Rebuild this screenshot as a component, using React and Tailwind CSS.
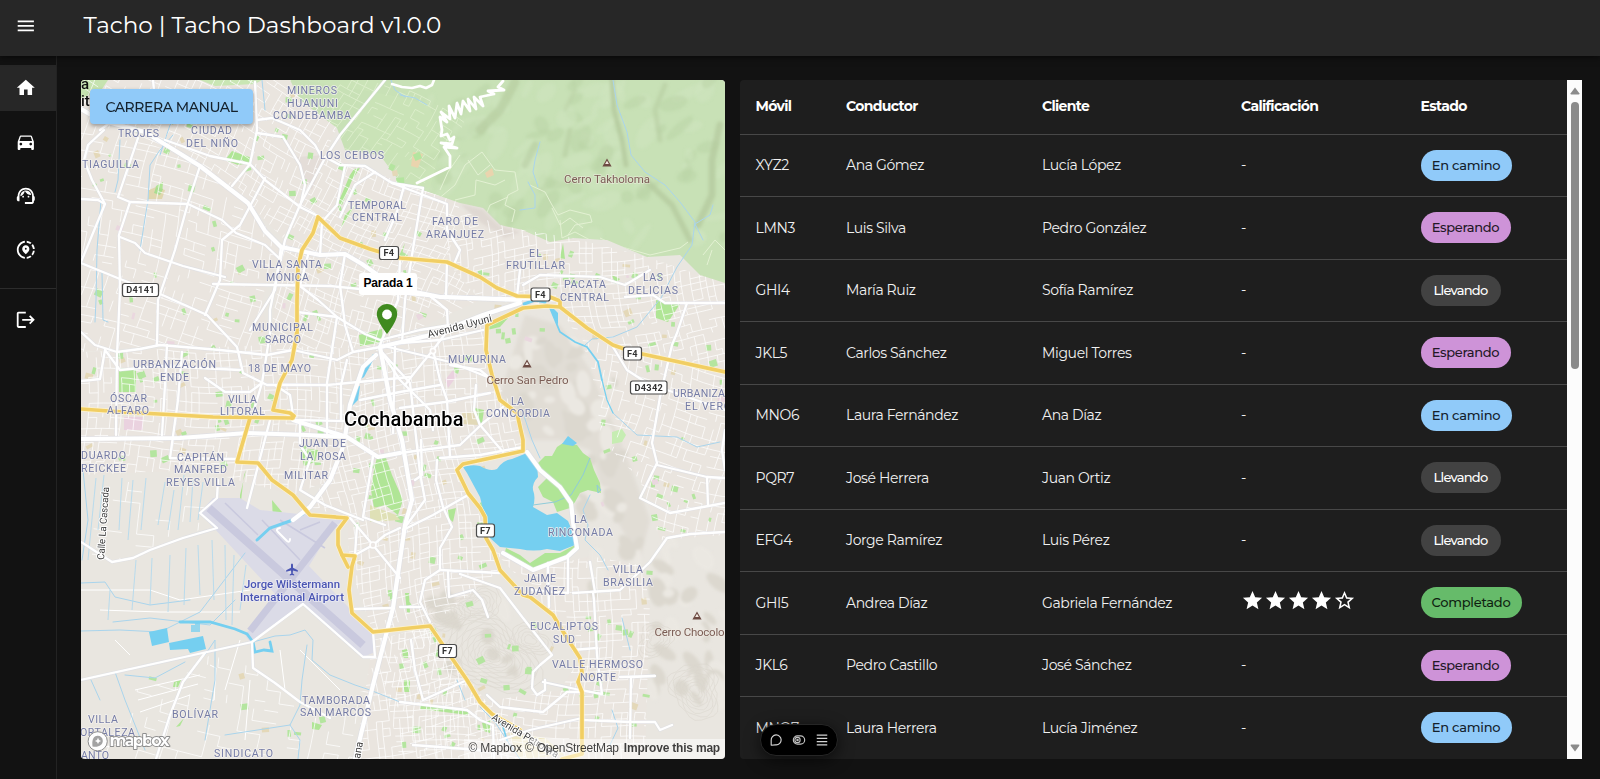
import React from "react";
import {
  MdMenu,
  MdHome,
  MdDirectionsCar,
  MdSupportAgent,
  MdShareLocation,
  MdLogout,
  MdStar,
  MdStarBorder,
} from "react-icons/md";

/* ---------- map data (map canvas spans x 81..725, y 80..758) ---------- */

const makeRandom = (seed) => () => {
  seed = (seed * 1664525 + 1013904223) % 4294967296;
  return seed / 4294967296;
};

/* A slightly warped street grid, rotated by `angle` around its centre. */
function streetGrid({ cx, cy, w, h, angle, sx, sy, keep, seed }) {
  const rnd = makeRandom(seed);
  const a = (angle * Math.PI) / 180;
  const node = (i, j) => {
    const u = i * sx + Math.sin(j * 0.31 + seed) * 3.5 + Math.sin(i * 1.7 + seed) * 1.6 - w / 2;
    const v = j * sy + Math.sin(i * 0.27 + seed * 2) * 3.5 + Math.cos(j * 1.9 + seed) * 1.6 - h / 2;
    const x = cx + u * Math.cos(a) - v * Math.sin(a);
    const y = cy + u * Math.sin(a) + v * Math.cos(a);
    return x.toFixed(1) + " " + y.toFixed(1);
  };
  let d = "";
  for (let i = 0; i * sx <= w; i++) {
    for (let j = 0; j * sy <= h; j++) {
      if (rnd() < keep) d += `M${node(i, j)}L${node(i + 1, j)}`;
      if (rnd() < keep) d += `M${node(i, j)}L${node(i, j + 1)}`;
    }
  }
  return d;
}

/* An irregular closed contour line of mean radius `r`. */
function contour(cx, cy, r, seed) {
  let d = "";
  for (let k = 0; k <= 36; k++) {
    const t = (k / 36) * Math.PI * 2;
    const q = r * (1 + 0.2 * Math.sin(2 * t + seed) + 0.13 * Math.sin(3 * t + seed * 2) + 0.05 * Math.sin(9 * t + seed + r));
    d += (k ? "L" : "M") + (cx + q * Math.cos(t) * 1.1).toFixed(1) + " " + (cy + q * Math.sin(t) * 0.9).toFixed(1);
  }
  return d;
}

const districts = [
  { id: "d1", clip: "81,80 290,80 337,128 325,155 285,240 248,203 200,166 138,138 81,109", cx: 205, cy: 155, w: 320, h: 230, angle: 28, sx: 8, sy: 8, keep: 0.66, seed: 3 },
  { id: "d2", clip: "81,109 138,138 200,166 248,203 281,247 262,300 270,350 160,345 81,352", cx: 170, cy: 230, w: 320, h: 330, angle: 14, sx: 11, sy: 9, keep: 0.5, seed: 7 },
  { id: "d3", clip: "285,240 325,155 345,160 400,182 460,203 447,262 480,300 380,347 268,350", cx: 370, cy: 250, w: 290, h: 280, angle: 22, sx: 7.5, sy: 8, keep: 0.74, seed: 11 },
  { id: "d4", clip: "447,205 500,225 523,230 573,238 647,257 700,275 725,283 725,370 613,345 560,307 480,300 447,262", cx: 590, cy: 290, w: 320, h: 190, angle: -8, sx: 8, sy: 7.5, keep: 0.68, seed: 13 },
  { id: "d5", clip: "81,352 270,345 380,350 345,437 330,480 293,495 200,470 81,475", cx: 210, cy: 410, w: 330, h: 190, angle: 2, sx: 8, sy: 8.5, keep: 0.68, seed: 17 },
  { id: "d6", clip: "380,340 487,325 492,375 517,413 523,451 457,470 487,530 500,570 430,626 373,632 350,567 347,518 310,507 345,437", cx: 415, cy: 480, w: 220, h: 330, angle: -9, sx: 7.5, sy: 8, keep: 0.75, seed: 19 },
  { id: "d7", clip: "560,307 613,345 725,372 725,535 660,540 640,480 602,440 590,360", cx: 650, cy: 425, w: 220, h: 260, angle: 14, sx: 8, sy: 9, keep: 0.58, seed: 23 },
  { id: "d8", clip: "493,550 533,570 590,556 640,565 650,600 645,759 400,759 375,640 430,626 480,702 560,690 580,658 553,615", cx: 520, cy: 660, w: 300, h: 240, angle: 3, sx: 8, sy: 8, keep: 0.66, seed: 29 },
  { id: "d9", clip: "373,640 430,626 500,720 560,759 355,759", cx: 440, cy: 700, w: 220, h: 170, angle: -12, sx: 8, sy: 9, keep: 0.68, seed: 31 },
  { id: "d10", clip: "135,690 180,678 210,655 255,668 300,702 370,690 357,759 100,759", cx: 230, cy: 712, w: 300, h: 130, angle: 12, sx: 13, sy: 11, keep: 0.3, seed: 37 },
  { id: "d11", clip: "81,480 200,485 213,525 112,562 81,620", cx: 145, cy: 545, w: 160, h: 170, angle: 6, sx: 15, sy: 14, keep: 0.2, seed: 41 },
];

const arterials = [
  "81,109 100,120 145,132 200,166 248,203 265,231 281,247 320,255 345,254 362,264 385,280 415,292 440,297 520,300",
  "376,355 363,367 350,405 345,437 342,450 330,480 310,507 293,520",
  "380,347 435,334 483,315 520,303",
  "380,347 390,400 402,440 412,500 405,525 393,608 373,685 355,759",
  "527,452 540,470 560,487 571,503 574,530 577,548 567,557 533,570 503,553",
  "81,439 180,438 247,433 307,435 345,437",
  "400,453 378,457 347,437 293,420",
];

const streets = [
  "104,130 88,145 84,160 92,180 105,204 81,262",
  "81,199 98,200 105,204",
  "81,263 120,279 158,293 207,315 237,347 243,373 267,385 327,385 410,377",
  "138,138 118,197 130,202 188,204 222,220 236,233 265,245 281,260",
  "200,166 188,203 175,250 158,300 157,345",
  "130,202 119,235 120,290 117,355 116,435",
  "120,237 135,243 145,253 183,266 225,277",
  "153,80 154,90 100,130",
  "255,82 257,130 250,164 265,180 300,207 320,217",
  "250,164 232,186",
  "257,133 283,137 300,165 305,185 300,207",
  "257,120 272,118 300,130 315,145 322,158",
  "165,140 210,156 250,164",
  "385,80 340,135 325,158 300,205 285,240 278,270 270,310 270,333 262,383 253,413",
  "325,157 340,165 365,166 392,183 447,204 447,230 460,250 455,262",
  "345,166 337,205 322,222 320,255",
  "265,178 240,225 222,240 220,280 205,315",
  "375,172 355,185 340,217",
  "392,183 423,188 412,255 405,300 402,343",
  "385,240 397,212 404,186",
  "213,284 330,286 430,296 560,300",
  "430,296 447,310 448,330 433,350 440,380 447,400 450,457",
  "400,261 398,300 380,345",
  "281,247 275,290 250,330",
  "308,255 300,286 318,300 337,317 327,383 327,433",
  "345,254 340,285 345,325 353,352",
  "297,312 337,317 365,334 380,340 420,330 450,325",
  "81,332 95,345 117,352 140,349 160,345 220,350 267,355 293,350 337,360 353,352 380,347",
  "81,381 100,379 105,350 120,370 160,366 240,370",
  "167,345 165,385 162,435",
  "182,352 178,400 173,436 170,458 237,459",
  "205,378 225,392 250,392 262,383",
  "275,385 290,395 293,415",
  "293,420 345,421",
  "270,420 247,508",
  "300,420 300,445 310,460 300,490 325,505 363,520",
  "373,457 367,493 363,517 385,525",
  "347,360 341,385 341,420",
  "380,350 410,383 420,473 425,500 403,530",
  "380,350 400,380 430,410 433,430",
  "433,350 415,372 405,385",
  "400,343 440,340 483,330",
  "400,408 445,402 490,393",
  "360,400 400,392 440,385",
  "400,453 460,445 483,423 503,407",
  "440,458 480,455 523,447",
  "437,460 436,480 443,507 452,527 440,548 440,570 425,580 420,602 430,622",
  "450,365 480,370 492,380",
  "476,385 474,410 480,425 503,452",
  "415,480 422,475 421,440",
  "403,530 433,515 468,495",
  "440,570 500,573",
  "400,607 420,607",
  "448,572 449,597 473,590 482,600 488,617",
  "460,574 500,588 523,618 552,655 540,665 533,672 532,688 537,695 545,690 545,680",
  "543,682 580,690 602,694 597,655 594,600 593,592",
  "487,695 500,707 543,712 567,692 580,692",
  "568,558 568,593 530,590",
  "573,593 620,590 650,562 667,538 690,534 725,532",
  "590,562 595,592",
  "548,563 549,607",
  "573,650 597,648",
  "620,677 655,676 631,677 630,738",
  "583,720 630,722 655,722 660,730 672,725",
  "400,702 467,710 480,720 493,725 494,759",
  "413,745 480,750",
  "500,740 530,730 582,718",
  "411,640 415,670 423,700 467,680",
  "687,303 677,333 672,345 660,397 652,443 657,463 640,498 670,513 725,503",
  "657,465 707,477 725,478",
  "707,477 708,505",
  "613,347 627,370 647,383 690,398 725,410",
  "81,680 207,652 252,642 303,604 363,657 375,657 373,632",
  "252,642 253,668 275,683 300,702 330,718",
  "205,653 183,682 170,715 156,759",
  "81,542 112,562 133,558 150,550 183,538 217,528 200,513 217,498 218,480",
  "357,525 355,555 373,545 385,535 400,528",
  "350,518 373,545 400,578",
  "355,609 393,608",
  "523,285 540,275 600,277 625,285 650,270",
  "625,297 653,295 665,303 725,303",
  "517,296 520,270",
  "725,430 722,450 725,470",
  "447,262 446,297",
  "380,345 450,362 490,378",
  "395,347 393,433",
];

const highways = [
  "297,333 297,300 298,267 302,250 313,233 318,217 340,238 370,249 400,258 447,262 480,277 497,288 517,296 550,297 560,301 560,306",
  "297,330 296,338 292,360 280,383 273,410 290,413 294,416 292,418",
  "81,409 123,412 213,417 293,418",
  "250,418 237,462 258,463 272,480 293,495 310,515 347,518 338,530 338,545 342,555 355,556 352,566 349,590 352,613 373,632 410,628 430,626 447,651 467,680 480,702 492,714 520,730",
  "342,555 348,567",
  "725,372 633,352 613,345 587,328 560,307 547,306 523,308 487,325 486,350 492,375 500,400 517,413 523,440 523,451 500,456 463,464 457,470 468,493 480,508 485,517 486,538 493,550 500,570 523,595 530,597 553,615 567,638 580,658 582,672 578,682 582,692 582,754 562,759",
];

const creeks = [
  "613,80 617,105 627,132 631,155 645,172 665,185 680,202 695,222 692,245 677,267 661,298 637,327 613,337 592,339 585,345",
  "713,205 710,215 695,224 703,240",
  "540,142 535,160 533,172 538,187",
  "528,182 535,195 535,208 520,210",
  "400,95 415,98 427,105",
  "391,80 395,90 405,97",
  "522,410 532,440 540,458",
  "613,413 637,435 677,437 697,447 720,442",
  "590,495 583,510 588,525 585,540 600,555 608,570",
  "173,135 160,150 150,165 148,200 140,250",
  "185,110 170,125 160,155",
  "120,140 118,180 115,192",
  "101,200 97,250 96,300 95,322",
  "102,273 103,320 108,322",
  "262,80 265,110",
  "81,583 105,582 115,597 150,605 190,600",
  "81,631 120,630 160,632 200,612 245,553",
  "113,622 150,618 210,625 235,600",
  "253,642 275,636 290,635 305,630 313,640 312,660 330,675 355,685 370,690 400,702",
  "307,645 302,680 300,705 290,725 225,735",
  "290,725 300,740 298,759",
  "115,672 125,700 137,730 145,750",
  "125,675 155,678 185,662",
  "205,655 215,640 215,680 205,740",
  "480,707 495,722 510,745 520,759",
  "83,470 88,520 82,560",
  "612,710 618,728 610,745",
  "457,680 465,700",
  "622,618 630,650",
  "91,680 100,700",
];

const fieldLines = [
  [96, 478, 88, 560], [104, 475, 98, 530], [122, 478, 119, 530], [133, 480, 128, 540],
  [146, 478, 141, 530], [165, 482, 158, 525], [174, 490, 168, 530], [184, 475, 178, 530],
  [193, 480, 190, 522], [203, 482, 198, 520], [136, 560, 132, 610], [152, 558, 150, 605],
  [170, 555, 168, 612], [186, 548, 184, 605], [198, 545, 200, 595], [212, 540, 214, 600],
  [225, 545, 226, 620], [234, 555, 232, 625], [246, 565, 240, 610], [110, 590, 108, 620],
];

const parks = [
  "119,368 136,368 136,392 119,392",
  "359,335 382,329 383,342 360,346",
  "377,457 386,458 392,475 403,500 398,515 385,505 374,508 371,490 374,470",
  "360,168 352,180 342,205 338,203 350,175 354,169",
  "225,160 232,151 252,158 250,163 238,165",
  "300,448 318,450 315,462 304,466",
  "656,300 680,304 668,322 656,318",
  "272,500 282,512 273,522",
  "506,548 520,555 530,563 545,553 560,553 575,545 574,553 560,558 533,568 505,552",
  "475,408 484,410 482,424 475,422",
  "485,323 508,318 500,327 487,330",
  "448,510 456,508 453,522 448,518",
  "156,186 163,182 162,195 154,193",
  "174,682 181,680 178,687 173,687",
  "184,718 180,726 176,727",
  "312,722 322,725 319,730 312,729",
  "405,593 409,593 410,613 407,612",
  "404,680 410,680 410,692 404,692",
  "402,650 408,649 408,658 403,658",
  "482,723 491,720 490,733 484,731",
  "563,243 560,258 565,259",
  "405,243 402,254 398,258",
  "612,275 620,279 615,284",
  "355,205 349,216 341,228 345,215",
  "420,705 470,712 468,715 420,709",
  "240,495 246,470 244,475 240,510",
];

/* Small scattered gardens, tan lots and pink institutions. */
const lots = (() => {
  const rnd = makeRandom(97);
  const out = [];
  const zones = [
    [85, 130, 190, 210, 30], [270, 150, 150, 170, 34], [85, 340, 240, 130, 40],
    [350, 350, 130, 260, 48], [470, 245, 240, 100, 32], [600, 340, 120, 190, 28],
    [500, 570, 150, 180, 28], [380, 620, 110, 130, 22], [130, 80, 160, 70, 16], [130, 660, 200, 90, 7],
  ];
  zones.forEach(([x, y, w, h, n]) => {
    for (let i = 0; i < n; i++) {
      const k = rnd();
      out.push({
        x: x + rnd() * w, y: y + rnd() * h, w: 2.5 + rnd() * 5.5, h: 2.5 + rnd() * 4.5, r: (rnd() - 0.5) * 60,
        f: k < 0.8 ? "#b4e59f" : k < 0.95 ? "#e4d8b8" : "#ead7df",
      });
    }
  });
  return out;
})();

const hillShade = (() => {
  const rnd = makeRandom(5);
  const out = [];
  for (let i = 0; i < 110; i++) {
    const x = 425 + rnd() * 300;
    const y = 80 + rnd() * 165;
    out.push({ x, y, rx: 4 + rnd() * 14, ry: 3 + rnd() * 7, r: -70 + rnd() * 60, f: rnd() < 0.4 ? "#bad3a5" : "#d0e6bf" });
  }
  return out;
})();

const rockShade = (() => {
  const rnd = makeRandom(15);
  const out = [];
  const zones = [[515, 325, 70, 110, 26], [580, 380, 45, 150, 26], [590, 540, 130, 60, 22], [650, 590, 75, 120, 26], [425, 595, 90, 80, 16]];
  zones.forEach(([x, y, w, h, n]) => {
    for (let i = 0; i < n; i++) {
      out.push({
        x: x + rnd() * w, y: y + rnd() * h, rx: 3 + rnd() * 12, ry: 3 + rnd() * 7, r: 30 + rnd() * 60,
        f: rnd() < 0.5 ? "#dcd8cf" : "#ebe8e2",
      });
    }
  });
  return out;
})();

/* [text, left, baseline, width] */
const areaLabels = [
  ["MINEROS", 287, 94, 50], ["HUANUNI", 287, 106.5, 51], ["CONDEBAMBA", 273, 119, 78],
  ["TROJES", 118, 137, 41], ["CIUDAD", 191, 134, 41], ["DEL NIÑO", 186, 147, 52],
  ["TIAGUILLA", 82, 168, 57], ["LOS CEIBOS", 320, 158.5, 64],
  ["TEMPORAL", 348, 208.5, 58], ["CENTRAL", 352, 221, 50],
  ["FARO DE", 432, 225, 46], ["ARANJUEZ", 426, 237.5, 58],
  ["VILLA SANTA", 252, 268, 70], ["MÓNICA", 266, 281, 43],
  ["EL", 529, 256.5, 13], ["FRUTILLAR", 506, 269, 59],
  ["PACATA", 564, 288, 42], ["CENTRAL", 560, 300.5, 49],
  ["LAS", 643, 281, 20], ["DELICIAS", 628, 293.5, 50],
  ["MUNICIPAL", 252, 330.5, 61], ["SARCO", 265, 343, 36],
  ["URBANIZACIÓN", 133, 368, 83], ["ENDE", 160, 380.5, 29],
  ["18 DE MAYO", 248, 372, 63],
  ["ÓSCAR", 110, 401.5, 37], ["ALFARO", 107, 414, 42],
  ["VILLA", 228, 402.5, 29], ["LITORAL", 220, 415, 45],
  ["JUAN DE", 299, 447, 47], ["LA ROSA", 300, 459.5, 46], ["MILITAR", 284, 479, 44],
  ["CAPITÁN", 177, 460.5, 47], ["MANFRED", 174, 473, 53], ["REYES VILLA", 166, 485.5, 69],
  ["DUARDO", 81, 459, 45], ["REICKEE", 81, 471.5, 45],
  ["MUYURINA", 448, 362.5, 58], ["LA", 511, 404.5, 13], ["CONCORDIA", 486, 417, 64],
  ["URBANIZA", 673, 396.5, 52], ["EL VERG", 685, 409.5, 46],
  ["LA", 574, 523, 13], ["RINCONADA", 548, 535.5, 65],
  ["VILLA", 613, 573, 30], ["BRASILIA", 603, 585.5, 50],
  ["JAIME", 524, 582, 32], ["ZUDAÑEZ", 514, 595, 51],
  ["EUCALIPTOS", 530, 630, 68], ["SUD", 553, 642.5, 22],
  ["VALLE HERMOSO", 552, 668, 91], ["NORTE", 580, 680.5, 36],
  ["TAMBORADA", 302, 703.5, 68], ["SAN MARCOS", 300, 716, 71],
  ["BOLÍVAR", 172, 718, 46], ["VILLA", 88, 723, 30], ["ORTALEZA", 80, 735.5, 55],
  ["ANTO", 81, 758.5, 28], ["SINDICATO", 214, 756.5, 59],
];

const peaks = [
  ["Cerro Takholoma", 564, 182.5, 86, 607, 163],
  ["Cerro San Pedro", 486.5, 384, 82, 527, 364],
  ["Cerro Chocolo", 654.5, 636, 70, 697, 616],
];

/* [text, left, top, width] */
const shields = [
  ["F4", 379.5, 246.5, 19], ["D4141", 122.5, 283.5, 36], ["F4", 531, 288, 19], ["F4", 623.5, 347, 18],
  ["D4342", 630.5, 381, 36.5], ["F7", 476.5, 524, 18], ["F7", 438.5, 644.5, 18],
];

function Lines({ list, stroke, width, opacity }) {
  return (
    <g fill="none" stroke={stroke} strokeWidth={width} strokeLinejoin="round" strokeLinecap="round" opacity={opacity}>
      {list.map((points, i) => (
        <polyline key={i} points={points} />
      ))}
    </g>
  );
}

/* [cx, cy, number of rings] */
const contourCentres = [[490, 655, 13], [442, 615, 6], [478, 605, 6], [655, 640, 5], [695, 690, 8], [530, 640, 5]];

function CityMap() {
  return (
    <svg viewBox="81 80 644 679" className="block h-full w-full font-['Roboto','Noto_Sans',sans-serif]">
      <defs>
        {districts.map((d) => (
          <clipPath key={d.id} id={d.id}>
            <polygon points={d.clip} />
          </clipPath>
        ))}
        <clipPath id="hills">
          <path d="M290 80 300 100 337 128 345 150 380 155 400 182 460 203 483 208 500 225 523 230 550 242 573 238 607 240 647 257 680 255 700 275 725 283V80Z" />
        </clipPath>
        <filter id="soft" x="-20%" y="-20%" width="140%" height="140%">
          <feGaussianBlur stdDeviation="1.600" />
        </filter>
      </defs>

      {/* ground */}
      <rect x="81" y="80" width="644" height="679" fill="#e9e6e0" />
      {districts.slice(0, 9).map((d) => (
        <polygon key={d.id} points={d.clip} fill="#eae5df" />
      ))}
      <path d="M80 80H108L100 92 81 98Z" fill="#c6e3b0" />
      <path d="M200 80H262L255 84 215 86Z" fill="#c9e6b4" />

      {/* rocky slopes */}
      <g filter="url(#soft)">
        <path d="M525 315 560 325 590 370 620 440 650 520 640 560 605 500 590 450 560 440 530 440 500 395Z" fill="#e1ddd5" />
        {rockShade.map((s, i) => (
          <ellipse key={i} cx={s.x} cy={s.y} rx={s.rx} ry={s.ry} fill={s.f} transform={`rotate(${s.r} ${s.x} ${s.y})`} />
        ))}
      </g>
      <g fill="none" stroke="#dad6cd" strokeWidth="0.7" opacity="0.75">
        {contourCentres.map(([x, y, n], k) =>
          Array.from({ length: n }, (_, i) => <path key={k + "-" + i} d={contour(x, y, 5 + i * 3, k * 1.3)} />)
        )}
      </g>

      {/* green hills */}
      <g clipPath="url(#hills)">
        <rect x="280" y="80" width="445" height="210" fill="#c8e1b6" />
        <g filter="url(#soft)">
          {hillShade.map((s, i) => (
            <ellipse key={i} cx={s.x} cy={s.y} rx={s.rx} ry={s.ry} fill={s.f} opacity="0.5" transform={`rotate(${s.r} ${s.x} ${s.y})`} />
          ))}
          <g fill="none" stroke="#b4c99d" strokeLinecap="round">
            <path d="M612 80 614 110 622 140 626 165" strokeWidth="5" opacity=".8" />
            <path d="M645 180 672 205 690 240" strokeWidth="6" opacity=".7" />
            <path d="M720 125 712 160 712 195 698 225" strokeWidth="7" opacity=".75" />
            <path d="M515 82 500 110 480 130" strokeWidth="9" opacity=".6" />
            <path d="M665 85 655 110 660 140" strokeWidth="5" opacity=".5" />
            <path d="M570 130 565 155" strokeWidth="5" opacity=".5" />
            <path d="M535 145 525 165" strokeWidth="7" opacity=".5" />
            <path d="M575 90 565 110" strokeWidth="4" opacity=".35" />
          </g>
        </g>
        <path d="M300 80 385 80 350 125 400 182 430 188 440 150 430 105 390 95Z" fill="#cbe5b8" opacity=".6" />
        <path
          d={streetGrid({ cx: 375, cy: 135, w: 120, h: 110, angle: 30, sx: 8, sy: 8, keep: 0.5, seed: 51 })}
          fill="none" stroke="#dff0cf" strokeWidth="0.8"
        />
        <g fill="none" stroke="#e3f1d3" strokeWidth="1">
          <path d="M437 200 455 185 465 165 482 152 495 170 515 172 518 190 508 195 505 205 515 210 512 222" />
          <path d="M455 200 475 195 476 180 495 185 505 180M530 185 545 192 552 205 558 215 570 210 590 215 592 222 575 225 568 235" />
          <path d="M560 220 562 238 575 232 590 240M600 238 615 245 650 255 680 248 688 242M703 255 715 240 725 250M707 265 712 250" />
          <path d="M440 190 448 172 460 155M468 160 478 175 490 165M508 197 490 205 486 215M552 208 560 225 570 218 583 228" />
        </g>
        <path d="M413 152 423 154 418 168 411 166Z" fill="#ead4ae" />
        <path d="M485 173 492 168 494 175 487 178Z" fill="#ead4ae" />
      </g>
      <path d="M460 204 483 209 500 226 520 232 505 238 480 222Z" fill="#ddd5cf" opacity=".8" filter="url(#soft)" />
      <path d="M296 157 325 155 312 190 302 178Z" fill="#e4ddd8" />

      {/* parks and lots */}
      {lots.map((l, i) => (
        <rect key={i} x={l.x} y={l.y} width={l.w} height={l.h} fill={l.f} transform={`rotate(${l.r} ${l.x} ${l.y})`} />
      ))}
      <g fill="#b0e596">
        {parks.map((p, i) => (
          <polygon key={i} points={p} />
        ))}
      </g>
      <path d="M124 417H143V430H124Z" fill="#ead2df" />
      <path d="M445 380 453 370 457 376 448 388Z" fill="#ead2df" />
      <path d="M462 413 477 411 478 425 462 424Z" fill="#e2d9b8" />
      <path d="M370 505 396 515 400 520 370 522Z" fill="#dfe0b6" />
      <path d="M508 733 545 738 565 755 520 759 513 745Z" fill="#eee7c4" />
      <path d="M612 432 622 429 626 435 622 442 612 444Z" fill="#c6edb2" />
      <path d="M156 187 165 190 162 199 148 199 149 190Z" fill="#e0d6ae" />
      <path d="M156 187 163 189 160 195 154 193Z" fill="#a9dd90" />

      {/* minor streets */}
      {districts.map((d) => (
        <path key={d.id} d={streetGrid(d)} clipPath={`url(#${d.id})`} fill="none" stroke="#ffffff" strokeWidth="1" opacity="0.72" />
      ))}
      <g fill="none" stroke="#fff" strokeWidth="1">
        <path d="M81 590H150L180 600 250 590M100 610 160 612 240 612M115 640 130 655M135 690 200 675M138 700 198 684M140 712 190 695M225 690 240 640M280 650 285 690M300 650 340 690M210 665 216 668 214 700M95 750 150 735M250 680 245 740" />
      </g>

      {/* airport */}
      <path d="M213 498 240 498 260 510 280 512 347 519 333 527 309 566 373 633 373 653 363 657 303 603 250 642 245 635 277 596 200 513Z" fill="#dbdbe7" />
      <g stroke="#c9c9de" fill="none">
        <path d="M209 508 363 645" strokeWidth="8" />
        <path d="M335 523 250 631" strokeWidth="7" />
        <path d="M225 503 258 535M262 520 300 560M280 520 325 548M300 530 320 522" strokeWidth="1.500" />
      </g>

      {/* water */}
      <Lines list={creeks} stroke="#a9d4ec" width={1} />
      <g stroke="#b3d9ed" strokeWidth="0.9">
        {fieldLines.map(([a, b, c, d], i) => (
          <line key={i} x1={a} y1={b} x2={c} y2={d} />
        ))}
      </g>
      <g fill="#75cff0">
        <path d="M463 467 Q472 464 480 466 Q490 472 497 469 Q503 460 512 459 L527 453 537 463 538 477 Q532 483 533 490 Q536 498 533 507 L547 515 557 513 568 521 573 533 575 545 560 551 547 549 Q534 552 520 549 L500 547 490 538 487 525 480 497 467 473Z" />
        <path d="M149 632 167 628 169 642 152 646ZM169 643 203 636 206 649 190 653 188 649 170 650Z" />
        <path d="M191 625H195V623H200V632H191Z" opacity=".75" />
        <path d="M373 354 376 355 364 377 358 381ZM355 387 360 386 358 400 350 408Z" />
        <path d="M549 304 558 313 558 325 553 316Z" />
      </g>
      <g fill="none" stroke="#75cff0" strokeLinecap="round">
        <path d="M180 622 210 622 235 629 247 634 253 642 255 652 264 650 272 651 270 642" strokeWidth="2.800" />
        <path d="M257 540 270 528 290 521 303 514" strokeWidth="3" />
        <path d="M550 308 560 332 575 342 587 347 598 362 602 380" strokeWidth="1.800" />
        <path d="M602 380 607 400 613 413" strokeWidth="1.200" />
        <path d="M524 304 535 300 545 302" strokeWidth="3" />
        <path d="M490 712 503 727 507 740" strokeWidth="1.600" />
      </g>
      <path d="M538 463 545 456 552 456 557 447 563 443 577 445 583 453 590 458 594 470 600 483 601 493 588 490 580 493 575 502 570 508 557 512 553 502 543 497 538 487 547 478Z" fill="#b0e596" />
      <path d="M562 444 568 436 577 443 573 446Z" fill="#75cff0" />
      <path d="M597 485 601 490 598 493ZM590 458 583 475 571 495 555 502 533 505" fill="none" stroke="#8fcbd9" strokeWidth="1" />

      {/* roads */}
      <Lines list={streets} stroke="#d9dce6" width={3.4} opacity={0.55} />
      <Lines list={arterials} stroke="#d9dce6" width={5.6} opacity={0.55} />
      <Lines list={streets} stroke="#ffffff" width={2.3} />
      <Lines list={arterials} stroke="#ffffff" width={4.2} />
      <g fill="none" stroke="#fff" strokeLinecap="round" strokeLinejoin="round">
        <path d="M280 528Q275 529 278 532L287 541Q290 543 290 539" strokeWidth="2" />
        <path d="M392 84 402 87 412 88 420 86 426 88 432 85 434 80" strokeWidth="2.600" />
        <path d="M503 81 498 87 504 90 488 91 494 94 480 97 483 106 474 97 476 109 468 99 470 111 463 101 461 114 457 103 455 118 449 106 450 119 441 112 447 122 440 117 442 130 441 136 447 134 450 140 454 137 452 144 441 143 457 148 444 147 450 156 450 167 417 183" strokeWidth="2.800" />
      </g>
      <circle cx="433" cy="351" r="2.600" fill="#ebe6e3" stroke="#fff" strokeWidth="1.600" />
      <circle cx="373" cy="545" r="3" fill="#ebe6e3" stroke="#fff" strokeWidth="1.600" />
      <Lines list={highways} stroke="#fdf3d0" width={5} />
      <Lines list={highways} stroke="#f1ce63" width={3.7} />

      {/* neighbourhood names */}
      <g fontSize="10.600" fontWeight="400" fill="#757ca6" stroke="#f4f1ee" strokeWidth="1.800" strokeOpacity=".75" paintOrder="stroke" strokeLinejoin="round">
        {areaLabels.map(([t, x, y, w], i) => (
          <text key={i} x={x} y={y} textLength={w} lengthAdjust="spacing">{t}</text>
        ))}
      </g>

      {/* peaks */}
      {peaks.map(([t, x, y, w, px, py]) => (
        <g key={t} fill="#7b5d55">
          <path d={`M${px} ${py - 4.5}l4.6 8h-9.2z`} fill="#6d4a42" />
          <path d={`M${px} ${py - 2.3}l1.9 3.4h-3.8z`} fill="#f4ebe4" />
          <text x={x} y={y} textLength={w} fontSize="11.500" stroke="#f1ece4" strokeWidth="1.400" strokeOpacity=".6" paintOrder="stroke">{t}</text>
        </g>
      ))}

      {/* street names */}
      <g fontSize="10.500" fill="#3c3c3c" stroke="#fff" strokeWidth="2" paintOrder="stroke" strokeLinejoin="round">
        <text transform="translate(428.500 338) rotate(-14.500)" textLength="66">Avenida Uyuni</text>
        <text transform="translate(104 560) rotate(-86)" fontSize="9.800" textLength="73">Calle La Cascada</text>
        <text transform="translate(360 759) rotate(-80)" textLength="17">ana</text>
        <text transform="translate(491 719) rotate(31)" fontSize="10" textLength="76">Avenida Petrolera</text>
      </g>

      {/* airport name */}
      <g fill="#4a55b3" fontSize="11.400" fontWeight="500" stroke="#eeeef6" strokeWidth="1.600" paintOrder="stroke" strokeOpacity=".8">
        <path stroke="none" d="M292 563.500c.7 0 1 .8 1 1.600v2.600l4.800 2.600v1.400l-4.800-1.300-.3 3.100 1.500 1v.9l-2.200-.5-2.200.5v-.9l1.500-1-.3-3.100-4.800 1.300v-1.400l4.800-2.600v-2.600c0-.8.3-1.600 1-1.600z" />
        <text x="244" y="588" textLength="96">Jorge Wilstermann</text>
        <text x="240" y="600.500" textLength="104">International Airport</text>
      </g>

      {/* city */}
      <text x="344" y="425.500" textLength="119.500" fontSize="20" fontWeight="500" fill="#000" stroke="#fff" strokeWidth="2.400" paintOrder="stroke" strokeLinejoin="round">Cochabamba</text>
      <g fontSize="15" fontWeight="500" fill="#111">
        <text x="81" y="89">a</text>
        <text x="81" y="106">it</text>
      </g>

      {/* route shields */}
      {shields.map(([t, x, y, w], i) => (
        <g key={i}>
          <rect x={x} y={y} width={w} height="13" rx="2.200" fill="#fff" stroke="#4b4b4b" strokeWidth="1.200" />
          <text x={x + w / 2} y={y + 9.8} textAnchor="middle" fontSize="9.200" fontWeight="700" fill="#333" letterSpacing=".3">{t}</text>
        </g>
      ))}

      {/* stop marker */}
      <path d="M387 304c-5.800 0-10.200 4.400-10.200 10 0 7.400 10.200 20 10.200 20s10.200-12.600 10.200-20c0-5.600-4.400-10-10.200-10z" fill="#3f8a1f" />
      <circle cx="387" cy="314.500" r="4.900" fill="#fff" />

      {/* mapbox wordmark */}
      <g stroke="#8d8d8d" strokeWidth="1">
        <circle cx="97.700" cy="741.300" r="9.600" fill="#fff" fillOpacity=".95" />
        <path d="M92.500 746.500c-.8-6.500.7-10.800 5.300-10.800a5 5 0 0 1 5 5c0 4.200-4 6.800-10.300 5.800z" fill="#a3a3a3" stroke="none" />
        <path d="M98 737.800l1 2.100 2.100 1-2.100 1-1 2.100-1-2.100-2.100-1 2.100-1z" fill="#fff" stroke="none" />
        <text x="109.500" y="746" textLength="60" fontSize="16.500" fontWeight="700" fill="#fff" stroke="#8f8f8f" strokeWidth="2" paintOrder="stroke" strokeLinejoin="round" className="font-['Montserrat',sans-serif]">mapbox</text>
      </g>
    </svg>
  );
}

/* ---------- application shell ---------- */

const navItems = [
  { icon: MdHome, active: true },
  { icon: MdDirectionsCar },
  { icon: MdSupportAgent },
  { icon: MdShareLocation },
];

function Sidebar() {
  return (
    <nav className="flex w-[57px] shrink-0 flex-col border-r border-[#232323] bg-[#121212] pt-[9px] text-white">
      <div className="flex flex-col gap-[8px]">
        {navItems.map(({ icon: Icon, active }, i) => (
          <div key={i} className={active ? "flex h-[46px] items-center bg-[#272727] pl-[15px]" : "flex h-[46px] items-center pl-[15px]"}>
            <Icon className="size-[21.600px]" />
          </div>
        ))}
      </div>
      <div className="mt-[15px] border-t border-[#2c2c2c] pt-[8px]">
        <div className="flex h-[46px] items-center pl-[15px]">
          <MdLogout className="size-[21.600px]" />
        </div>
      </div>
    </nav>
  );
}

const rows = [
  ["XYZ2", "Ana Gómez", "Lucía López", 0, "En camino"],
  ["LMN3", "Luis Silva", "Pedro González", 0, "Esperando"],
  ["GHI4", "María Ruiz", "Sofía Ramírez", 0, "Llevando"],
  ["JKL5", "Carlos Sánchez", "Miguel Torres", 0, "Esperando"],
  ["MNO6", "Laura Fernández", "Ana Díaz", 0, "En camino"],
  ["PQR7", "José Herrera", "Juan Ortiz", 0, "Llevando"],
  ["EFG4", "Jorge Ramírez", "Luis Pérez", 0, "Llevando"],
  ["GHI5", "Andrea Díaz", "Gabriela Fernández", 4, "Completado"],
  ["JKL6", "Pedro Castillo", "José Sánchez", 0, "Esperando"],
  ["MNO7", "Laura Herrera", "Lucía Jiménez", 0, "En camino"],
];

const chipStyles = {
  "En camino": "w-[91px] bg-[#90caf9] text-[#14212c] tracking-[-0.250px]",
  Esperando: "w-[90px] bg-[#ce93d8] text-[#231826] tracking-[-0.350px]",
  Llevando: "w-[80px] bg-[#424242] font-bold text-white tracking-[-0.750px]",
  Completado: "w-[101px] bg-[#66bb6a] text-[#101f11] tracking-[-0.250px]",
};

function Rating({ value }) {
  return (
    <span className="-mt-[4px] flex text-white">
      {[1, 2, 3, 4, 5].map((n) => (
        <span key={n} className="flex w-[23.100px] justify-center">
          {n <= value ? <MdStar className="size-[23px]" /> : <MdStarBorder className="size-[23px]" />}
        </span>
      ))}
    </span>
  );
}

const columns = "grid grid-cols-[90.500px_196px_199px_179.500px_1fr] items-center pl-[15.500px]";

function Trips() {
  return (
    <section className="flex h-[679px] w-[842px] shrink-0 overflow-hidden rounded-l bg-[#1e1e1e] text-[14px] text-[#f1f1f1] tracking-[-0.370px]">
      <div className="min-w-0 flex-1 font-[450]">
        <div className={columns + " h-[54.500px] border-b border-[#484848] font-bold text-white tracking-[-0.650px]"}>
          <span>Móvil</span>
          <span>Conductor</span>
          <span>Cliente</span>
          <span>Calificación</span>
          <span>Estado</span>
        </div>
        {rows.map(([unit, driver, client, rating, state]) => (
          <div key={unit} className={columns + " h-[62.500px] border-b border-[#484848]"}>
            <span className="pt-[1px]">{unit}</span>
            <span className="pt-[1px]">{driver}</span>
            <span className="pt-[1px]">{client}</span>
            {rating ? <Rating value={rating} /> : <span className="pt-[1px]">-</span>}
            <span className={"flex h-[31px] items-center justify-center rounded-full text-[13px] font-medium " + chipStyles[state]}>{state}</span>
          </div>
        ))}
      </div>
      <div className="flex w-[15px] shrink-0 flex-col items-center bg-[#fcfcfc]">
        <svg viewBox="0 0 10 8" className="mt-[7px] h-[8px] w-[10px] fill-[#8b8b8b]">
          <path d="M5 .5 9.300 6.300Q9.800 7.500 8.500 7.500H1.500Q.2 7.500.7 6.300Z" />
        </svg>
        <div className="mt-[7px] h-[267px] w-[8px] rounded-full bg-[#8b8b8b]" />
        <svg viewBox="0 0 10 8" className="mt-auto mb-[7px] h-[8px] w-[10px] fill-[#8b8b8b]">
          <path d="M5 7.500.7 1.700Q.2.5 1.500.5H8.500Q9.800.5 9.300 1.700Z" />
        </svg>
      </div>
    </section>
  );
}

function FloatingToolbar() {
  return (
    <div className="absolute left-[760px] top-[724px] flex h-[32px] w-[78px] items-center justify-between rounded-full border border-[#262626] bg-black px-[8px] shadow-[0_4px_16px_rgba(0,0,0,0.6)]">
      <svg viewBox="0 0 16 16" className="size-[14px] fill-none stroke-[#d4d4d4] [stroke-width:1.300]">
        <path d="M2.500 14V8.200A5.700 5.700 0 1 1 8.200 13.600C6.200 13.600 5.500 13.500 2.500 14Z" strokeLinejoin="round" />
      </svg>
      <svg viewBox="0 0 16 16" className="size-[14px] fill-none stroke-[#c4c4c4] [stroke-width:1.300]">
        <rect x="1.500" y="3.300" width="13" height="9.400" rx="4.700" />
        <circle cx="6.300" cy="8" r="3" />
        <circle cx="6.300" cy="8" r=".8" />
      </svg>
      <svg viewBox="0 0 16 16" className="size-[14px] fill-none stroke-[#d4d4d4] [stroke-width:1.300]">
        <path d="M2 2.500H14M2 6.200H14M2 9.900H14M2 13.600H14" />
      </svg>
    </div>
  );
}

export default function App() {
  return (
    <div className="relative flex h-[779px] w-[1600px] flex-col overflow-hidden bg-[#121212] font-['Montserrat','Inter',sans-serif]">
      <header className="z-10 flex h-[56px] shrink-0 items-center bg-[#272727] pb-[4px] pl-[15px] text-white shadow-[0_2px_6px_rgba(0,0,0,0.5)]">
        <MdMenu className="size-[21.600px]" />
        <h1 className="-mt-[1px] ml-[47px] whitespace-nowrap text-[23.100px] leading-none">Tacho | Tacho Dashboard v1.0.0</h1>
      </header>
      <div className="flex min-h-0 flex-1">
        <Sidebar />
        <main className="flex gap-[15px] pl-[24px] pt-[24px]">
          <section className="relative h-[679px] w-[644px] shrink-0 overflow-hidden rounded">
            <CityMap />
            <button className="absolute left-[9px] top-[9px] h-[35px] w-[163px] rounded bg-[#90caf9] pt-[1px] text-[14px] font-medium tracking-[-0.450px] text-[#14212c] shadow-[0_2px_4px_rgba(0,0,0,0.35)]">
              CARRERA MANUAL
            </button>
            <div className="absolute left-[278px] top-[193px] flex h-[22px] w-[58px] items-center justify-center rounded-[3px] bg-white pb-[3px] font-['Liberation_Sans',sans-serif] text-[12px] font-bold tracking-[-0.100px] text-black">
              Parada 1
            </div>
            <div className="absolute bottom-0 right-0 flex h-[20px] items-center gap-[5px] bg-white/50 pb-[2px] pl-[5px] pr-[5px] font-['Liberation_Sans',sans-serif] text-[12px] text-black/75">
              <span className="whitespace-nowrap tracking-[-0.200px]">© Mapbox © OpenStreetMap</span>
              <span className="whitespace-nowrap font-bold tracking-[-0.200px]">Improve this map</span>
            </div>
          </section>
          <Trips />
        </main>
      </div>
      <FloatingToolbar />
    </div>
  );
}
